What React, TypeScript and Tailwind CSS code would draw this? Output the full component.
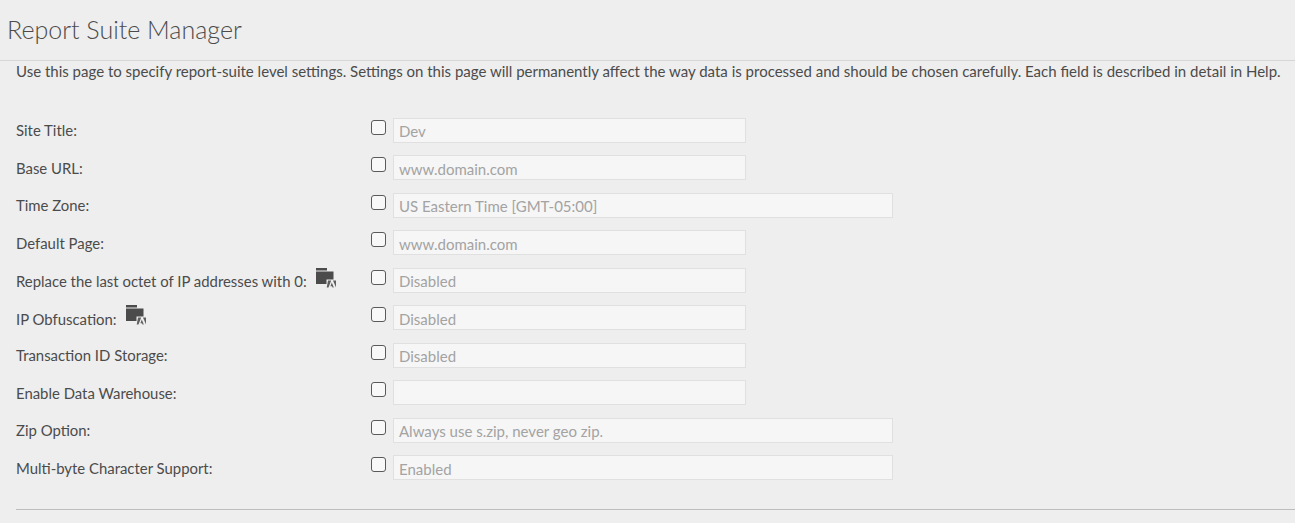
import React from "react";

function AdminIcon() {
  return (
    <svg width="22" height="22" viewBox="0 0 22 22" className="ml-[8px] mt-[-7px] shrink-0">
      <rect x="1" y="1" width="11" height="2.500" fill="#4b4b4b" />
      <path d="M1 4.500h17.500v8h-7v4.500H1z" fill="#4b4b4b" />
      <path d="M13 13.500h3.200l-2.700 7h-1.800z" fill="#5f5f5f" />
      <path d="M18 13.500h3v7z" fill="#5f5f5f" />
      <path d="M16.800 15.500l2 5h-1.300l-.5-1.300h-1.600z" fill="#5f5f5f" />
    </svg>
  );
}

type Row = { label: string; value: string; wide?: boolean; icon?: boolean };

const rows: Row[] = [
  { label: "Site Title:", value: "Dev" },
  { label: "Base URL:", value: "www.domain.com" },
  { label: "Time Zone:", value: "US Eastern Time [GMT-05:00]", wide: true },
  { label: "Default Page:", value: "www.domain.com" },
  { label: "Replace the last octet of IP addresses with 0:", value: "Disabled", icon: true },
  { label: "IP Obfuscation:", value: "Disabled", icon: true },
  { label: "Transaction ID Storage:", value: "Disabled" },
  { label: "Enable Data Warehouse:", value: "" },
  { label: "Zip Option:", value: "Always use s.zip, never geo zip.", wide: true },
  { label: "Multi-byte Character Support:", value: "Enabled", wide: true },
];

function SettingRow({ row }: { row: Row }) {
  return (
    <div className="flex h-[37.5px] items-start">
      <div
        className={
          "flex w-[355px] items-center text-[14.9px] leading-5 text-[#4b4b4b] " +
          (row.icon ? "pt-[3.5px]" : "pt-[2.5px]")
        }
      >
        <span>{row.label}</span>
        {row.icon && <AdminIcon />}
      </div>
      <div className="mt-[2px] h-[15px] w-[15px] shrink-0 rounded-[3px] border border-[#5a5a5a] bg-[#f8f8f8]" />
      <div
        className={
          "ml-[7px] h-[25px] border border-[#e0e0e0] bg-[#f6f6f6] pl-[5px] pt-[2.5px] text-[15px] leading-5 text-[#a3a3a3] " +
          (row.wide ? "w-[500px]" : "w-[353px]")
        }
      >
        {row.value}
      </div>
    </div>
  );
}

export default function App() {
  return (
    <div className="h-[523px] w-[1295px] overflow-hidden bg-[#eeeeee] font-['Lato','Open_Sans',sans-serif]">
      <div className="h-[61px] border-b border-[#d6d6d6] pl-[7px] pt-[11px] text-[25px] font-light leading-9 text-[#4b4b4b]">
        Report Suite Manager
      </div>
      <div className="pl-4">
        <p className="text-[15px] leading-5 whitespace-nowrap text-[#4b4b4b]">
          Use this page to specify report-suite level settings. Settings on this page will permanently affect the way data is processed and should be chosen carefully. Each field is described in detail in Help.
        </p>
        <div className="mt-[36.9px]">
          {rows.map((row) => (
            <SettingRow key={row.label} row={row} />
          ))}
        </div>
        <div className="mt-[16px] border-t border-[#bdbdbd]" />
      </div>
    </div>
  );
}
